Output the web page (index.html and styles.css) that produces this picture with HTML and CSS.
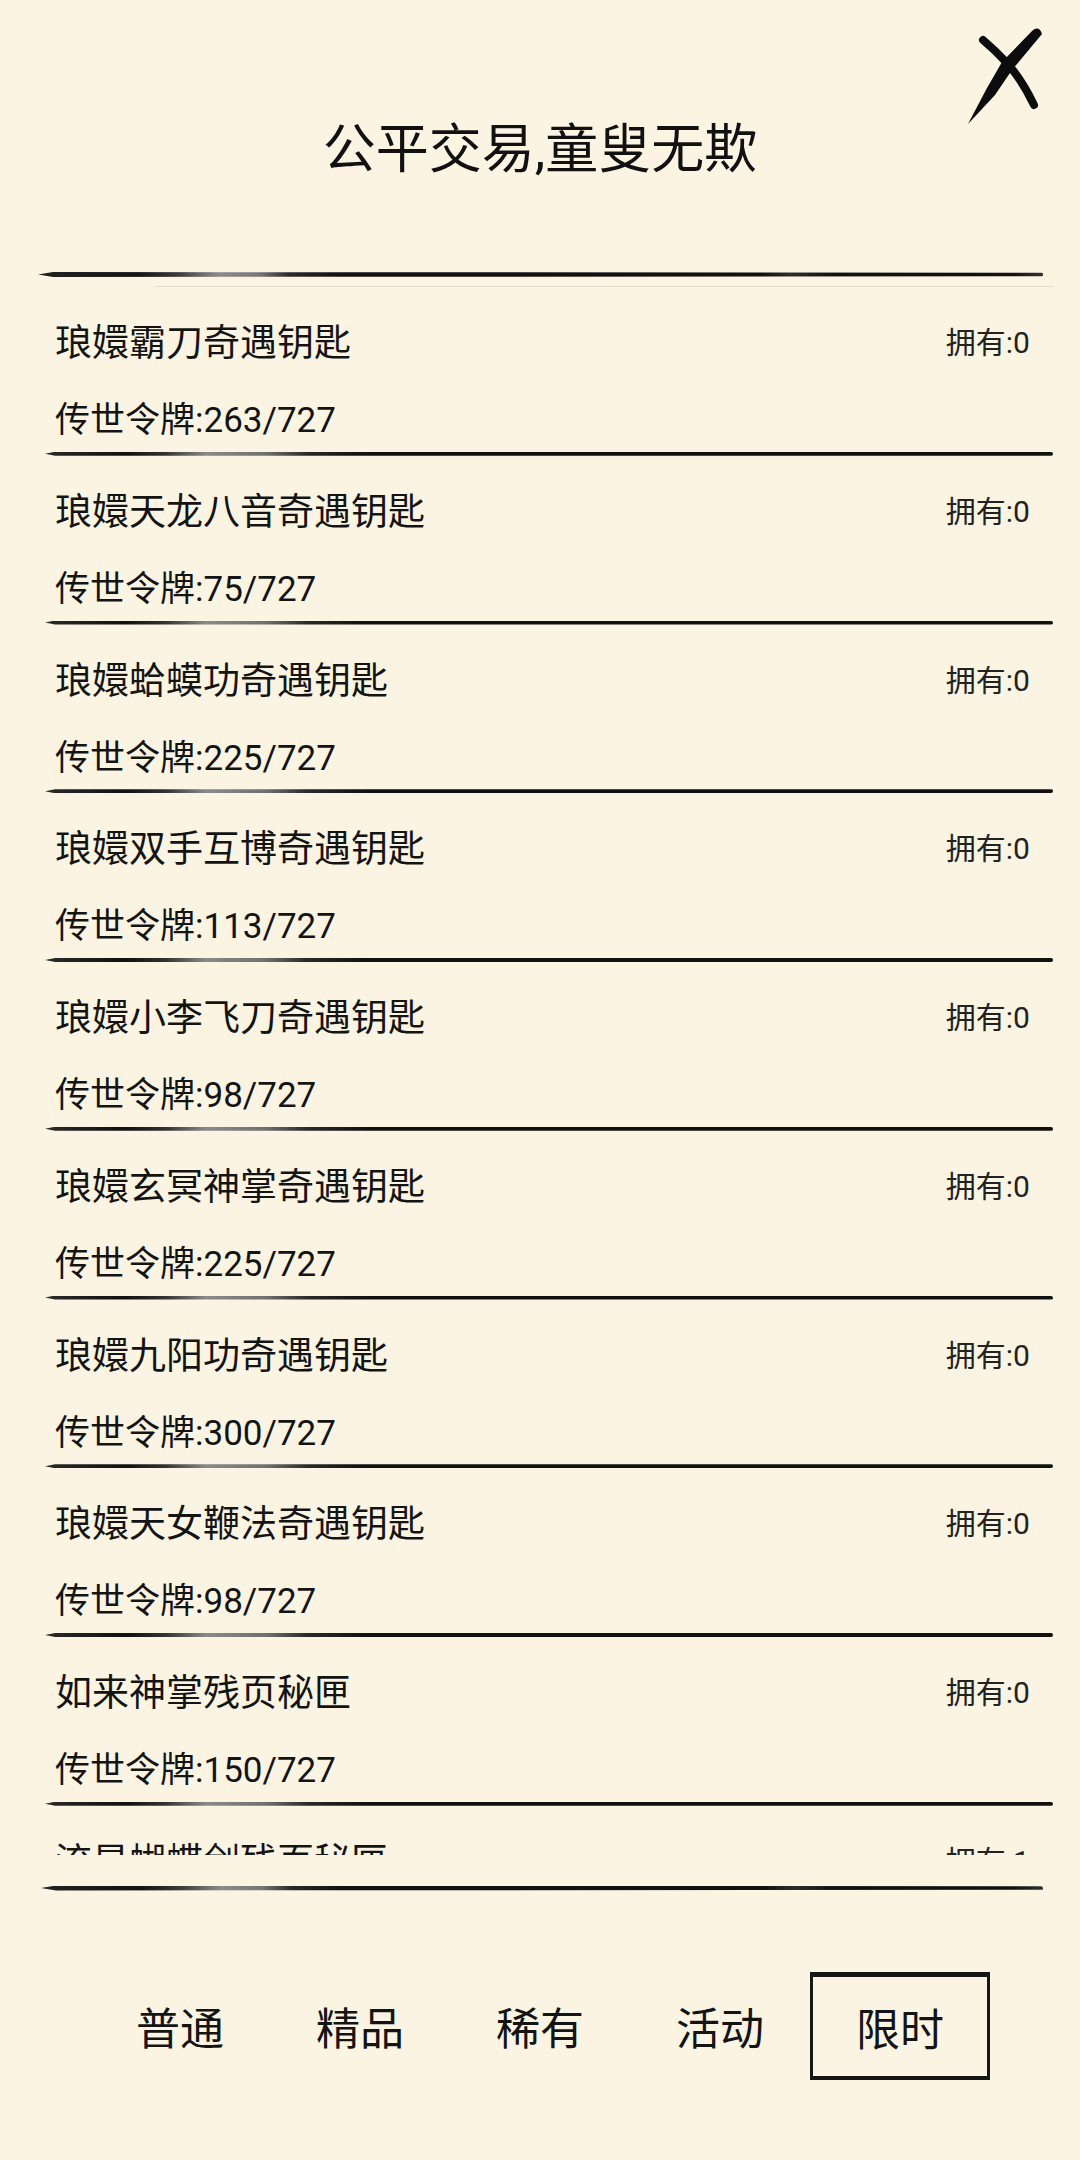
FILE: index.html
```html
<!DOCTYPE html>
<html lang="zh-CN">
<head>
    <meta charset="UTF-8">
    <meta name="viewport" content="width=device-width, initial-scale=1.0">
    <title>公平交易,童叟无欺</title>
    <link rel="stylesheet" href="styles.css">
</head>
<body>
    <div class="page">
        <div class="top">
            <h1>公平交易,童叟无欺</h1>
            <button class="close" aria-label="关闭">
                <svg width="130" height="130" viewBox="0 0 130 130">
                    <path d="M43 30 Q56 41 67 53 Q82 70 94 95" fill="none" stroke="#0c0c0c" stroke-width="8" stroke-linecap="round"/>
                    <path d="M92 21 Q99 15 102 24 L72 60 L55 85 L28 114 L47 78 L62 52 Z" fill="#0c0c0c"/>
                </svg>
            </button>
        </div>

        <div class="brush"></div>

        <div class="hairline"></div>

        <div class="list">
            <div class="row">
                <div class="row-head"><span class="name">琅嬛霸刀奇遇钥匙</span><span class="owned">拥有:0</span></div>
                <div class="row-sub">传世令牌:263/727</div>
            </div>
            <div class="row">
                <div class="row-head"><span class="name">琅嬛天龙八音奇遇钥匙</span><span class="owned">拥有:0</span></div>
                <div class="row-sub">传世令牌:75/727</div>
            </div>
            <div class="row">
                <div class="row-head"><span class="name">琅嬛蛤蟆功奇遇钥匙</span><span class="owned">拥有:0</span></div>
                <div class="row-sub">传世令牌:225/727</div>
            </div>
            <div class="row">
                <div class="row-head"><span class="name">琅嬛双手互博奇遇钥匙</span><span class="owned">拥有:0</span></div>
                <div class="row-sub">传世令牌:113/727</div>
            </div>
            <div class="row">
                <div class="row-head"><span class="name">琅嬛小李飞刀奇遇钥匙</span><span class="owned">拥有:0</span></div>
                <div class="row-sub">传世令牌:98/727</div>
            </div>
            <div class="row">
                <div class="row-head"><span class="name">琅嬛玄冥神掌奇遇钥匙</span><span class="owned">拥有:0</span></div>
                <div class="row-sub">传世令牌:225/727</div>
            </div>
            <div class="row">
                <div class="row-head"><span class="name">琅嬛九阳功奇遇钥匙</span><span class="owned">拥有:0</span></div>
                <div class="row-sub">传世令牌:300/727</div>
            </div>
            <div class="row">
                <div class="row-head"><span class="name">琅嬛天女鞭法奇遇钥匙</span><span class="owned">拥有:0</span></div>
                <div class="row-sub">传世令牌:98/727</div>
            </div>
            <div class="row">
                <div class="row-head"><span class="name">如来神掌残页秘匣</span><span class="owned">拥有:0</span></div>
                <div class="row-sub">传世令牌:150/727</div>
            </div>
            <div class="row">
                <div class="row-head"><span class="name">流星蝴蝶剑残页秘匣</span><span class="owned">拥有:1</span></div>
            </div>
        </div>

        <div class="brush brush-bottom"></div>

        <div class="tabs">
            <div class="tab">普通</div>
            <div class="tab">精品</div>
            <div class="tab">稀有</div>
            <div class="tab">活动</div>
            <div class="tab active">限时</div>
        </div>
    </div>
</body>
</html>
```

FILE: styles.css
```css
body {
    margin: 0;
    background-color: #fbf4e3;
    font-family: Roboto, "Noto Sans CJK SC", sans-serif;
    color: #1c1c1c;
}
.page {
    width: 1080px;
    height: 2160px;
    overflow: hidden;
}
.top {
    position: relative;
    height: 272px;
}
h1 {
    margin: 0;
    padding-top: 118px;
    font-size: 53px;
    line-height: 64px;
    font-weight: normal;
    text-align: center;
    color: #111;
}
.close {
    position: absolute;
    left: 940px;
    top: 10px;
    width: 130px;
    height: 130px;
    padding: 0;
    border: none;
    background: none;
    cursor: pointer;
}
.close svg {
    display: block;
}
.brush {
    height: 5px;
    margin: 0 37px 0 38px;
    border-radius: 3px;
    background: linear-gradient(90deg, #222 0%, #141414 10%, #3c3c3c 14%, #8c8c8c 18%, #777 22%, #2a2a2a 25%, #121212 30%, #111 72%, #2d2d2d 75%, #111 79%, #111 97%, #333 100%);
    clip-path: polygon(0 50%, 1.5% 0, 100% 15%, 100% 85%, 1.5% 100%);
}
.hairline {
    height: 1px;
    margin: 9px 26px 0 155px;
    background-color: #e2dacb;
}
.list {
    height: 1568px;
    overflow: hidden;
}
.row {
    padding: 28px 50px 0 55px;
    height: 168.75px;
    box-sizing: border-box;
}
.row::after {
    content: '';
    display: block;
    height: 4px;
    margin: 8.75px -23px 0 -10px;
    border-radius: 2px;
    background: linear-gradient(90deg, #2a2a2a 0%, #111 8%, #333 12%, #8a8a8a 16%, #6f6f6f 22%, #2a2a2a 26%, #111 32%, #111 100%);
    clip-path: polygon(0 50%, 1% 0, 100% 0, 100% 100%, 1% 100%);
}
.row-head {
    display: flex;
    justify-content: space-between;
    align-items: center;
    height: 50px;
}
.name {
    font-size: 37px;
    color: #141414;
}
.owned {
    font-size: 30px;
    color: #222;
}
.row-sub {
    margin-top: 34px;
    font-size: 35px;
    line-height: 44px;
    color: #141414;
}
.brush-bottom {
    margin: 30.5px 37px 0 41px;
}
.tabs {
    display: grid;
    grid-template-columns: repeat(5, 180px);
    margin: 81.5px 0 0 90px;
}
.tab {
    height: 108px;
    box-sizing: border-box;
    display: flex;
    align-items: center;
    justify-content: center;
    font-size: 44px;
    color: #141414;
}
.tab.active {
    border: 3px solid #161616;
    border-top-width: 5px;
    border-bottom-width: 4px;
}
```
